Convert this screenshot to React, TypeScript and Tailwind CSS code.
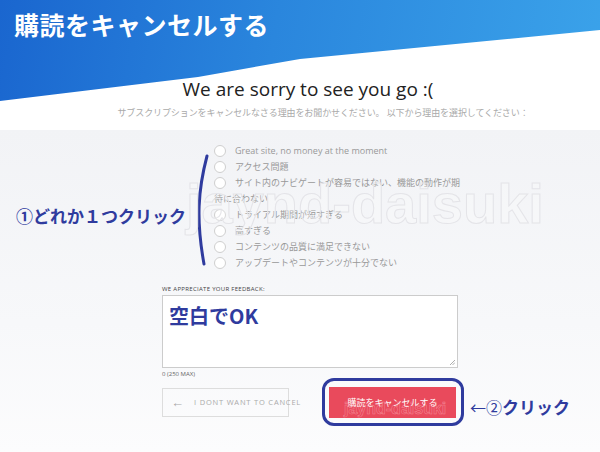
import React from 'react';

const jp = "font-['Open_Sans','Noto_Sans_CJK_JP',sans-serif]";
const navy = 'text-[#2f3b9e]';

const reasons = [
  'Great site, no money at the moment',
  'アクセス問題',
  'サイト内のナビゲートが容易ではない、機能の動作が期待に合わない',
  'トライアル期間が短すぎる',
  '高すぎる',
  'コンテンツの品質に満足できない',
  'アップデートやコンテンツが十分でない',
];

export default function App() {
  return (
    <div className={`relative w-[600px] h-[452px] overflow-hidden bg-white ${jp}`}>
      <Top />
      <Body />
      <Watermarks />
    </div>
  );
}

const Top = () => (
  <div className="relative h-[130px]">
    <div className="absolute inset-0 bg-[linear-gradient(100deg,#1a66cf_0%,#2a86dd_45%,#3ba3ea_100%)] [clip-path:polygon(0_0,100%_0,100%_30px,50%_59px,33%_77px,0_101px)]" />
    <h1 className="relative pl-[14px] pt-[6px] text-[25px] font-bold text-white tracking-[0.5px] font-['Noto_Sans_CJK_JP',sans-serif]">
      購読をキャンセルする
    </h1>
    <p className="relative mt-[34px] pl-[16px] text-center text-[19px] leading-[22px] text-[#222] font-['Open_Sans',sans-serif]">
      We are sorry to see you go :(
    </p>
    <p className="relative mt-[7px] pl-[46px] text-center text-[9px] leading-[12px] text-[#aaa] tracking-[-0.1px]">
      サブスクリプションをキャンセルなさる理由をお聞かせください。 以下から理由を選択してください：
    </p>
  </div>
);

function Body() {
  return (
    <div className="relative h-[322px] bg-[linear-gradient(180deg,#f2f3f6_0%,#f7f8fa_60%,#fcfcfd_100%)]">
      <div className="ml-[214px] w-[252px] pt-[13px] text-[9px] leading-[16px] text-[#999]">
        {reasons.map((r) => (
          <div key={r}>
            <span className="inline-block w-[12px] h-[12px] rounded-full border border-[#cfcfcf] bg-white align-[-3px] mr-[9px]" />
            {r}
          </div>
        ))}
      </div>

      <div className="ml-[162px] w-[296px] mt-[14px]">
        <div className="text-[6px] leading-[8px] tracking-[0.3px] text-[#444] uppercase font-['Open_Sans',sans-serif]">
          We appreciate your feedback:
        </div>
        <div className="relative mt-[2px] h-[73px] border border-[#ccc] bg-white px-[6px] pt-[5px]">
          <div className={`text-[20px] font-bold ${navy} font-['Noto_Sans_CJK_JP',sans-serif]`}>
            空白でOK
          </div>
          <svg className="absolute right-[2px] bottom-[2px]" width="6" height="6" viewBox="0 0 6 6">
            <path d="M1 6 L6 1 M3.5 6 L6 3.5" stroke="#999" strokeWidth="0.8" />
          </svg>
        </div>
        <div className="mt-[2px] text-[6px] leading-[8px] text-[#666] font-['Open_Sans',sans-serif]">
          0 (250 MAX)
        </div>

        <div className="flex items-center mt-[9px]">
          <div className="w-[127px] h-[29px] border border-[#ddd] flex items-center pl-[8px] whitespace-nowrap text-[#aaa] font-['Open_Sans',sans-serif]">
            <span className="text-[13px] leading-none mr-[10px]">←</span>
            <span className="text-[7.5px] tracking-[0.8px]">I DONT WANT TO CANCEL</span>
          </div>
          <div className="ml-[40px] w-[127px] h-[31px] bg-[#e94a5c] flex items-center justify-center text-white text-[9px]">
            購読をキャンセルする
          </div>
        </div>
      </div>

      {/* blog annotations */}
      <svg className="absolute left-[190px] top-[20px]" width="24" height="120" viewBox="0 0 24 120">
        <path d="M17 6 C 8 40, 6 70, 14 114" stroke="#2f3b9e" strokeWidth="3" fill="none" strokeLinecap="round" />
      </svg>
      <div className={`absolute left-[16px] top-[73px] text-[17px] font-bold ${navy} font-['Noto_Sans_CJK_JP',sans-serif]`}>
        ①どれか１つクリック
      </div>
      <div className="absolute left-[322px] top-[248px] w-[142px] h-[48px] rounded-[12px] border-[3px] border-[#2f3b9e]" />
      <div className={`absolute left-[470px] top-[264px] flex items-center ${navy} font-['Noto_Sans_CJK_JP',sans-serif]`}>
        <span className="text-[16px] font-normal">←</span>
        <span className="text-[16px] font-normal">②</span>
        <span className="text-[17px] font-bold">クリック</span>
      </div>
    </div>
  );
}

const Watermarks = () => (
  <>
    <div className="absolute left-[186px] top-[176px] text-[56px] font-bold leading-none text-[rgba(255,255,255,0.2)] [-webkit-text-stroke:1px_#e4e4e8] font-['Liberation_Sans',sans-serif] pointer-events-none">
      jaynd-daisuki
    </div>
    <div className="absolute left-[344px] top-[401px] text-[16px] font-bold leading-none text-transparent [-webkit-text-stroke:0.5px_rgba(255,200,208,0.5)] font-['Liberation_Sans',sans-serif] pointer-events-none">
      jaynd-daisuki
    </div>
  </>
);
